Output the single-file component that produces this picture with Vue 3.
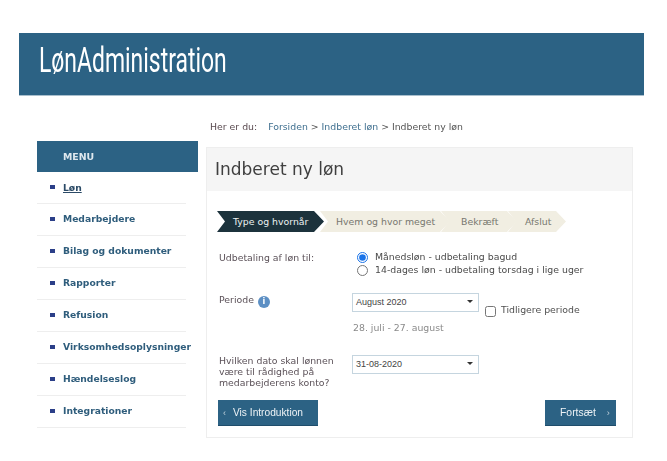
<script setup>
const menu = ['Løn','Medarbejdere','Bilag og dokumenter','Rapporter','Refusion','Virksomhedsoplysninger','Hændelseslog','Integrationer']
const steps = [
  { label: 'Type og hvornår', w: 107, pad: 16, active: true },
  { label: 'Hvem og hvor meget', w: 130, pad: 16 },
  { label: 'Bekræft', w: 76, pad: 20 },
  { label: 'Afslut', w: 58, pad: 17 }
]
</script>

<template>
  <div class="page">
    <header class="banner"><span class="logo">LønAdministration</span></header>
    <div class="columns">
      <aside class="side">
        <div class="menu-head">MENU</div>
        <ul class="menu">
          <li v-for="(m, i) in menu" :key="m" class="menu-row">
            <i class="bullet"></i><a :class="{ current: i === 0 }">{{ m }}</a>
          </li>
        </ul>
      </aside>
      <main class="content">
        <div class="crumbs">
          <span class="here">Her er du:</span>
          <a>Forsiden</a> &gt; <a>Indberet løn</a> &gt; Indberet ny løn
        </div>
        <section class="card">
          <h1 class="card-head">Indberet ny løn</h1>
          <div class="card-body">
            <div class="steps">
              <div v-for="s in steps" :key="s.label" class="step" :class="{ active: s.active }" :style="{ width: s.w + 'px', paddingLeft: s.pad + 'px' }">{{ s.label }}</div>
            </div>
            <div class="form">
              <div class="row row-pay">
                <label class="lbl">Udbetaling af løn til:</label>
                <div class="radios">
                  <label class="radio"><input type="radio" name="p" checked>Månedsløn - udbetaling bagud</label>
                  <label class="radio"><input type="radio" name="p">14-dages løn - udbetaling torsdag i lige uger</label>
                </div>
              </div>
              <div class="row row-period">
                <label class="lbl">Periode <span class="info">i</span></label>
                <div class="field">
                  <div class="inline">
                    <div class="select">August 2020<i class="caret"></i></div>
                    <label class="check"><input type="checkbox">Tidligere periode</label>
                  </div>
                  <div class="range">28. juli - 27. august</div>
                </div>
              </div>
              <div class="row row-date">
                <label class="lbl">Hvilken dato skal lønnen være til rådighed på medarbejderens konto?</label>
                <div class="select">31-08-2020<i class="caret"></i></div>
              </div>
            </div>
            <div class="actions">
              <button class="btn btn-back"><span class="chev">‹</span>Vis Introduktion</button>
              <button class="btn btn-next">Fortsæt<span class="chev">›</span></button>
            </div>
          </div>
        </section>
      </main>
    </div>
  </div>
</template>

<style>
html, body { margin: 0; background: #fff; }
</style>

<style scoped>
.page {
  width: 667px; height: 461px; box-sizing: border-box; padding: 33px 23px 0 19px; overflow: hidden;
  font-family: "DejaVu Sans", Verdana, sans-serif; font-size: 9.35px; color: #4a4a4a;
  filter: blur(0.35px);
}
.banner { height: 63px; background: #2c6284; border-bottom: 1px solid #a9bfcd; box-sizing: border-box; padding: 0 0 8px 20px; display: flex; align-items: center; }
.logo {
  font-family: "Liberation Sans Narrow", "Roboto", sans-serif; font-size: 35px; color: #fff;
  display: inline-block; transform: scaleX(0.655); transform-origin: left center; white-space: nowrap;
}
.columns { display: flex; margin-left: 18px; margin-top: 24px; }
.side { width: 161px; margin-top: 21px; margin-right: 8px; flex: none; }
.menu-head { height: 31px; background: #2c6284; color: #dfe8ee; font-weight: 700; font-size: 9.4px; line-height: 31px; padding-left: 26px; box-sizing: border-box; }
.menu { list-style: none; margin: 0; padding: 0; width: 149px; }
.menu-row { height: 32px; box-sizing: border-box; border-bottom: 1px solid #eeeeee; display: flex; align-items: center; padding: 0 0 2px 13px; white-space: nowrap; }
.menu-row:first-child { padding-bottom: 1px; }
.bullet { width: 5px; height: 4px; background: #2b3f88; margin-right: 8px; flex: none; }
.menu-row a { color: #2f5d7c; font-weight: 700; font-size: 9.2px; }
.menu-row a.current { color: #2b4a66; text-decoration: underline; }
.content { width: 427px; flex: none; }
.crumbs { height: 27px; padding-left: 4px; box-sizing: border-box; line-height: 13px; color: #555; white-space: nowrap; }
.crumbs .here { color: #5a4a50; margin-right: 11px; }
.crumbs a { color: #3f6f8f; }
.card { border: 1px solid #eeeeee; box-sizing: border-box; height: 291px; margin: 0; }
.card-head { margin: 0; height: 43px; background: #f5f5f5; font-weight: 400; font-size: 17px; line-height: 43px; padding-left: 8px; color: #3f3f3f; }
.card-body { padding: 20px 17px 0 11px; }
.steps { display: flex; height: 21px; margin-left: -1px; }
.step {
  flex: none; margin-right: -9px; box-sizing: border-box; background: #f1eee2; color: #77776f;
  line-height: 21px; white-space: nowrap;
  clip-path: polygon(0 0, calc(100% - 10px) 0, 100% 50%, calc(100% - 10px) 100%, 0 100%, 8px 50%);
}
.step.active { background: #1c323c; color: #eef2f2; position: relative; z-index: 1; margin-right: -4px; }
.form { padding-left: 1px; margin-top: 19px; }
.row { display: grid; grid-template-columns: 133px 1fr; }
.lbl { color: #5b5158; line-height: 11px; }
.row-pay { height: 36px; }
.row-pay .lbl { padding-top: 1px; }
.radios { display: flex; flex-direction: column; padding-left: 5px; margin-top: -1px; }
.radio { display: flex; align-items: center; height: 13px; color: #4a4a4a; white-space: nowrap; }
.radio input { width: 11px; height: 11px; margin: 2px 7px 0 0; accent-color: #1a73e8; }
.row-period { height: 68px; }
.row-period .lbl { padding-top: 7px; }
.field { padding-top: 6px; }
.info { display: inline-block; width: 12px; height: 12px; border-radius: 50%; background: #5c8fc4; color: #fff; font-size: 8px; line-height: 12px; text-align: center; margin-left: 1px; vertical-align: -1px; font-weight: 700; }
.inline { display: flex; align-items: flex-start; height: 19px; }
.select {
  width: 127px; height: 19px; box-sizing: border-box; border: 1px solid #c5d5df; background: #fff; color: #444;
  font-family: "Liberation Sans", Arial, sans-serif; font-size: 9px; line-height: 17px; padding-left: 3px; position: relative;
}
.caret { position: absolute; right: 5px; top: 6px; border-left: 3px solid transparent; border-right: 3px solid transparent; border-top: 3px solid #333; }
.check { display: flex; align-items: center; margin-left: 6px; margin-top: 8px; white-space: nowrap; color: #4f4f4f; }
.check input { width: 11px; height: 11px; margin: 5px 5px 0 0; }
.range { margin-top: 10px; padding-left: 1px; color: #8a8a8a; line-height: 11px; }
.row-date { height: 45px; }
.row-date .lbl { width: 125px; }
.actions { display: flex; justify-content: space-between; width: 398px; }
.btn {
  height: 26px; background: #2c6284; border: 0; border-bottom: 1px solid #1f4d6b; color: #eef3f6;
  font-family: "Liberation Sans", Arial, sans-serif; padding: 0; display: flex; align-items: center;
}
.btn-back { width: 100px; padding-left: 5px; font-size: 10.2px; }
.btn-back .chev { margin-right: 7px; }
.btn-next { width: 71px; padding-left: 15px; font-size: 10.4px; }
.btn-next .chev { margin-left: 11px; }
.chev { font-size: 9px; opacity: .75; }
</style>
